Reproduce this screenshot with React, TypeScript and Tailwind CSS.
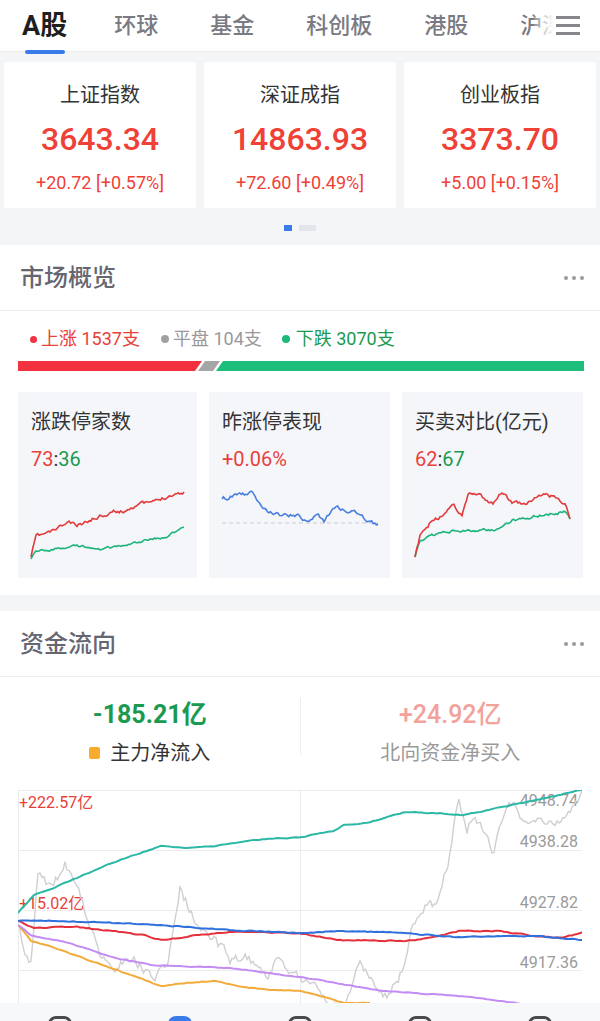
import React from "react";

type Pt = [number, number];

function makeRand(seed: number) {
  let s = seed;
  return () => {
    s = (s * 16807) % 2147483647;
    return s / 2147483647;
  };
}

// builds a jagged line through key points (page coordinates)
function wiggle(keys: Pt[], amp: number, seed: number, step = 1.5) {
  const rand = makeRand(seed);
  let n = 0;
  let d = `M${keys[0][0]} ${keys[0][1]}`;
  for (let i = 1; i < keys.length; i++) {
    const [x0, y0] = keys[i - 1];
    const [x1, y1] = keys[i];
    const steps = Math.max(1, Math.round((x1 - x0) / step));
    for (let k = 1; k <= steps; k++) {
      const t = k / steps;
      n = n * 0.5 + (rand() - 0.5) * amp;
      const last = i === keys.length - 1 && k === steps;
      const y = y0 + (y1 - y0) * t + (last ? 0 : n);
      d += ` L${(x0 + (x1 - x0) * t).toFixed(1)} ${y.toFixed(1)}`;
    }
  }
  return d;
}

const tabs = ["环球", "基金", "科创板", "港股", "沪深"];

const indices = [
  { name: "上证指数", value: "3643.34", change: "+20.72 [+0.57%]" },
  { name: "深证成指", value: "14863.93", change: "+72.60 [+0.49%]" },
  { name: "创业板指", value: "3373.70", change: "+5.00 [+0.15%]" },
];

const miniRed1 = wiggle(
  [[31, 558], [36, 537], [50, 533], [69, 523], [77, 527], [100, 517], [115, 512], [122, 513], [138, 505], [153, 503], [168, 497], [184, 493]],
  3, 11,
);
const miniGreen1 = wiggle(
  [[31, 560], [36, 553], [77, 547], [100, 550], [130, 545], [153, 540], [168, 537], [184, 528]],
  2, 23,
);
const miniBlue2 = wiggle(
  [[223, 500], [230, 498], [253, 493], [264, 510], [276, 515], [299, 517], [310, 525], [318, 515], [325, 522], [337, 507], [348, 513], [360, 513], [371, 523], [379, 525]],
  3.5, 37,
);
const miniRed3 = wiggle(
  [[416, 558], [421, 537], [432, 523], [444, 517], [455, 505], [463, 518], [469, 495], [482, 497], [494, 505], [503, 493], [513, 503], [528, 505], [540, 495], [555, 498], [566, 505], [571, 520]],
  3, 53,
);
const miniGreen3 = wiggle(
  [[416, 558], [421, 542], [440, 533], [467, 532], [497, 530], [513, 522], [536, 517], [566, 513], [571, 520]],
  2.5, 71,
);

const teal = wiggle(
  [[18, 915], [34, 897], [46, 893], [77, 880], [107, 867], [134, 857], [161, 848], [184, 850], [214, 848], [253, 842], [302, 839], [333, 833], [344, 827], [367, 825], [406, 814], [440, 815], [463, 817], [513, 807], [582, 792], [584, 792]],
  0.8, 5, 3,
);
const grayLine = wiggle(
  [[18, 927], [25, 953], [31, 963], [38, 873], [50, 890], [65, 867], [77, 883], [88, 920], [100, 957], [115, 970], [134, 960], [153, 980], [168, 967], [180, 893], [195, 920], [214, 940], [230, 963], [249, 960], [268, 977], [279, 962], [302, 980], [318, 993], [329, 1010], [344, 1007], [360, 967], [371, 980], [387, 1000], [402, 973], [413, 923], [425, 910], [436, 907], [448, 863], [459, 800], [467, 830], [475, 817], [482, 833], [494, 853], [501, 830], [513, 803], [520, 820], [528, 827], [543, 820], [559, 827], [574, 810], [582, 793]],
  9, 91, 2,
);
const blueLine = wiggle(
  [[18, 923], [34, 922], [145, 926], [230, 932], [299, 935], [337, 933], [383, 934], [459, 939], [536, 938], [584, 942]],
  0.8, 13, 3,
);
const redLine = wiggle(
  [[18, 923], [34, 930], [77, 929], [145, 937], [161, 942], [199, 937], [230, 934], [299, 935], [337, 942], [406, 943], [436, 939], [459, 933], [498, 933], [536, 938], [563, 940], [584, 934]],
  1, 29, 3,
);
const purpleLine = wiggle(
  [[18, 927], [31, 937], [69, 945], [115, 960], [153, 967], [230, 970], [306, 980], [383, 993], [459, 998], [517, 1005], [540, 1010]],
  0.6, 41, 3,
);
const orangeLine = wiggle(
  [[18, 927], [31, 943], [46, 947], [103, 967], [161, 988], [184, 985], [214, 983], [249, 990], [299, 993], [329, 1000], [344, 1005], [370, 1005]],
  0.8, 61, 3,
);

const SectionHeader: React.FC<{ title: string }> = ({ title }) => (
  <div className="flex h-[66px] items-center justify-between border-b border-[#eeeeee] pl-[20px] pr-[16px]">
    <h3 className="text-[24px] font-medium text-[#666670]">{title}</h3>
    <div className="flex gap-[4px]">
      <span className="h-[4px] w-[4px] rounded-full bg-[#999]" />
      <span className="h-[4px] w-[4px] rounded-full bg-[#999]" />
      <span className="h-[4px] w-[4px] rounded-full bg-[#999]" />
    </div>
  </div>
);

const MiniCard: React.FC<{
  title: string;
  value: React.ReactNode;
  viewX: number;
  width: number;
  children: React.ReactNode;
}> = ({ title, value, viewX, width, children }) => (
  <div className="flex h-[186px] flex-col bg-[#f5f6fa]">
    <div className="pl-[13px] pt-[16px] text-[20px] leading-[28px] text-[#333]">{title}</div>
    <div className="mt-[9px] pl-[13px] text-[20px] leading-[28px]">{value}</div>
    <svg
      className="mt-[6px] block"
      width={width}
      height={90}
      viewBox={`${viewX} 480 ${width} 90`}
      fill="none"
    >
      {children}
    </svg>
  </div>
);

const App: React.FC = () => {
  return (
    <div className="min-h-screen w-[600px] overflow-hidden bg-white font-['Roboto','Noto_Sans_CJK_SC',sans-serif]">
      {/* tabs */}
      <div className="relative flex h-[52px] items-center border-b border-[#ececec] bg-white pl-[22px]">
        <div className="relative">
          <span className="text-[27px] font-bold leading-[32px] text-[#1f1f1f]">A股</span>
          <span className="absolute left-[3px] top-[40px] h-[4px] w-[40px] rounded-full bg-[#3a7bea]" />
        </div>
        <div className="ml-[47px] flex gap-[52px]">
          {tabs.map((t) => (
            <span key={t} className="whitespace-nowrap text-[22px] font-medium leading-[32px] text-[#7a7a82]">
              {t}
            </span>
          ))}
        </div>
        <div className="absolute right-0 top-0 flex h-full w-[66px] items-center justify-end bg-[linear-gradient(to_right,rgba(255,255,255,0.2),#fff_30%)] pr-[20px]">
          <div className="flex flex-col gap-[5px]">
            <span className="h-[3px] w-[24px] bg-[#86868e]" />
            <span className="h-[3px] w-[24px] bg-[#86868e]" />
            <span className="h-[3px] w-[24px] bg-[#86868e]" />
          </div>
        </div>
      </div>

      {/* index cards */}
      <div className="bg-[#f4f5f7] px-[4px] pb-[14px] pt-[10px]">
        <div className="grid grid-cols-3 gap-[8px]">
          {indices.map((it) => (
            <div key={it.name} className="flex h-[146px] flex-col items-center rounded-[3px] bg-white">
              <div className="pt-[19px] text-[20px] leading-[28px] text-[#333]">{it.name}</div>
              <div className="mt-[11px] text-[32px] font-medium leading-[38px] text-[#ef4136]">{it.value}</div>
              <div className="mt-[13px] text-[18px] leading-[24px] text-[#ef4136]">{it.change}</div>
            </div>
          ))}
        </div>
        <div className="mt-[17px] flex justify-center gap-[7px]">
          <span className="h-[6px] w-[8px] bg-[#3a7bea]" />
          <span className="h-[6px] w-[17px] bg-[#e3e5ea]" />
        </div>
      </div>

      {/* market overview */}
      <div className="bg-white pb-[17px]">
        <SectionHeader title="市场概览" />
        <div className="flex items-center pl-[30px] pt-[16px] text-[18px] leading-[24px]">
          <span className="h-[7px] w-[7px] rounded-full bg-[#ef3340]" />
          <span className="ml-[4px] text-[#e8413a]">上涨 1537支</span>
          <span className="ml-[21px] h-[8px] w-[8px] rounded-full bg-[#a0a0a0]" />
          <span className="ml-[4px] text-[#999]">平盘 104支</span>
          <span className="ml-[20px] h-[8px] w-[8px] rounded-full bg-[#1dbb7a]" />
          <span className="ml-[6px] text-[#1a9a50]">下跌 3070支</span>
        </div>
        <div className="mt-[10px] flex pl-[18px]">
          <div className="h-[10px] w-[184px] bg-[#f2333f] [clip-path:polygon(0_0,100%_0,calc(100%_-_7px)_100%,0_100%)]" />
          <div className="ml-[-4px] h-[10px] w-[22px] bg-[#a6a6a6] [clip-path:polygon(7px_0,100%_0,calc(100%_-_7px)_100%,0_100%)]" />
          <div className="ml-[-4px] h-[10px] w-[368px] bg-[#1dbe7c] [clip-path:polygon(7px_0,100%_0,100%_100%,0_100%)]" />
        </div>
        <div className="mt-[21px] grid grid-cols-[179px_181px_181px] gap-[12px] px-[18px]">
          <MiniCard
            title="涨跌停家数"
            value={
              <>
                <span className="text-[#e8413a]">73</span>
                <span className="text-[#333]">:</span>
                <span className="text-[#1a9a50]">36</span>
              </>
            }
            viewX={18}
            width={179}
          >
            <path d={miniGreen1} stroke="#1db47a" strokeWidth={1.6} />
            <path d={miniRed1} stroke="#e23b3b" strokeWidth={1.6} />
          </MiniCard>
          <MiniCard
            title="昨涨停表现"
            value={<span className="text-[#e8413a]">+0.06%</span>}
            viewX={210}
            width={181}
          >
            <line x1={223} y1={524} x2={379} y2={524} stroke="#c9cbd3" strokeWidth={1.2} strokeDasharray="4 3" />
            <path d={miniBlue2} stroke="#4a7fe0" strokeWidth={1.6} />
          </MiniCard>
          <MiniCard
            title="买卖对比(亿元)"
            value={
              <>
                <span className="text-[#e8413a]">62</span>
                <span className="text-[#333]">:</span>
                <span className="text-[#1a9a50]">67</span>
              </>
            }
            viewX={403}
            width={181}
          >
            <path d={miniGreen3} stroke="#1db47a" strokeWidth={1.6} />
            <path d={miniRed3} stroke="#e23b3b" strokeWidth={1.6} />
          </MiniCard>
        </div>
      </div>

      <div className="h-[16px] bg-[#f4f5f7]" />

      {/* capital flow */}
      <div className="bg-white">
        <SectionHeader title="资金流向" />
        <div className="flex pt-[22px]">
          <div className="flex flex-1 flex-col items-center">
            <div className="text-[25px] font-bold leading-[32px] text-[#1a9a50]">-185.21亿</div>
            <div className="mt-[8px] flex items-center">
              <span className="h-[12px] w-[11px] rounded-[2px] bg-[#f7ac2e]" />
              <span className="ml-[10px] text-[20px] leading-[28px] text-[#333]">主力净流入</span>
            </div>
          </div>
          <div className="mt-[-1px] h-[57px] w-px bg-[#eeeeee]" />
          <div className="flex flex-1 flex-col items-center">
            <div className="text-[25px] font-medium leading-[32px] text-[#f2a19b]">+24.92亿</div>
            <div className="mt-[8px] text-[20px] leading-[28px] text-[#9a9a9a]">北向资金净买入</div>
          </div>
        </div>

        <div className="relative mx-[18px] mt-[23px] h-[213px] overflow-hidden">
          <span className="absolute left-[1px] top-[3px] text-[16px] leading-[20px] text-[#e8413a]">+222.57亿</span>
          <span className="absolute left-[1px] top-[104px] text-[16px] leading-[20px] text-[#e8413a]">+15.02亿</span>
          <span className="absolute right-[4px] top-[1px] text-[16px] leading-[20px] text-[#9a9a9a]">4948.74</span>
          <span className="absolute right-[4px] top-[42px] text-[16px] leading-[20px] text-[#9a9a9a]">4938.28</span>
          <span className="absolute right-[4px] top-[103px] text-[16px] leading-[20px] text-[#9a9a9a]">4927.82</span>
          <span className="absolute right-[4px] top-[163px] text-[16px] leading-[20px] text-[#9a9a9a]">4917.36</span>
          <svg className="absolute inset-0" width={566} height={213} viewBox="18 792 566 213" fill="none">
            <g stroke="#ececf0" strokeWidth={1}>
              <line x1={18} y1={792.5} x2={584} y2={792.5} />
              <line x1={18} y1={852.5} x2={584} y2={852.5} />
              <line x1={18} y1={912.5} x2={584} y2={912.5} />
              <line x1={18} y1={972.5} x2={584} y2={972.5} />
              <line x1={18.5} y1={792} x2={18.5} y2={1005} />
              <line x1={300.5} y1={792} x2={300.5} y2={1005} />
              <line x1={583.5} y1={792} x2={583.5} y2={1005} />
            </g>
            <path d={grayLine} stroke="#cfcfd4" strokeWidth={1.4} />
            <path d={orangeLine} stroke="#f3ab3c" strokeWidth={2} />
            <path d={purpleLine} stroke="#c28cf2" strokeWidth={2} />
            <path d={redLine} stroke="#e5303c" strokeWidth={2} />
            <path d={blueLine} stroke="#2f70dc" strokeWidth={2} />
            <path d={teal} stroke="#2cb8a6" strokeWidth={2} />
          </svg>
        </div>
      </div>

      {/* bottom nav */}
      <div className="grid h-[60px] grid-cols-5 bg-[#f7f8fa]">
        {[0, 1, 2, 3, 4].map((i) => (
          <div key={i} className="flex justify-center pt-[13px]">
            <span
              className={
                i === 1
                  ? "h-[24px] w-[24px] rounded-[8px] bg-[#3a7bea]"
                  : "h-[24px] w-[24px] rounded-[8px] border-[3px] border-[#4a4a4e]"
              }
            />
          </div>
        ))}
      </div>
    </div>
  );
};

export default App;
